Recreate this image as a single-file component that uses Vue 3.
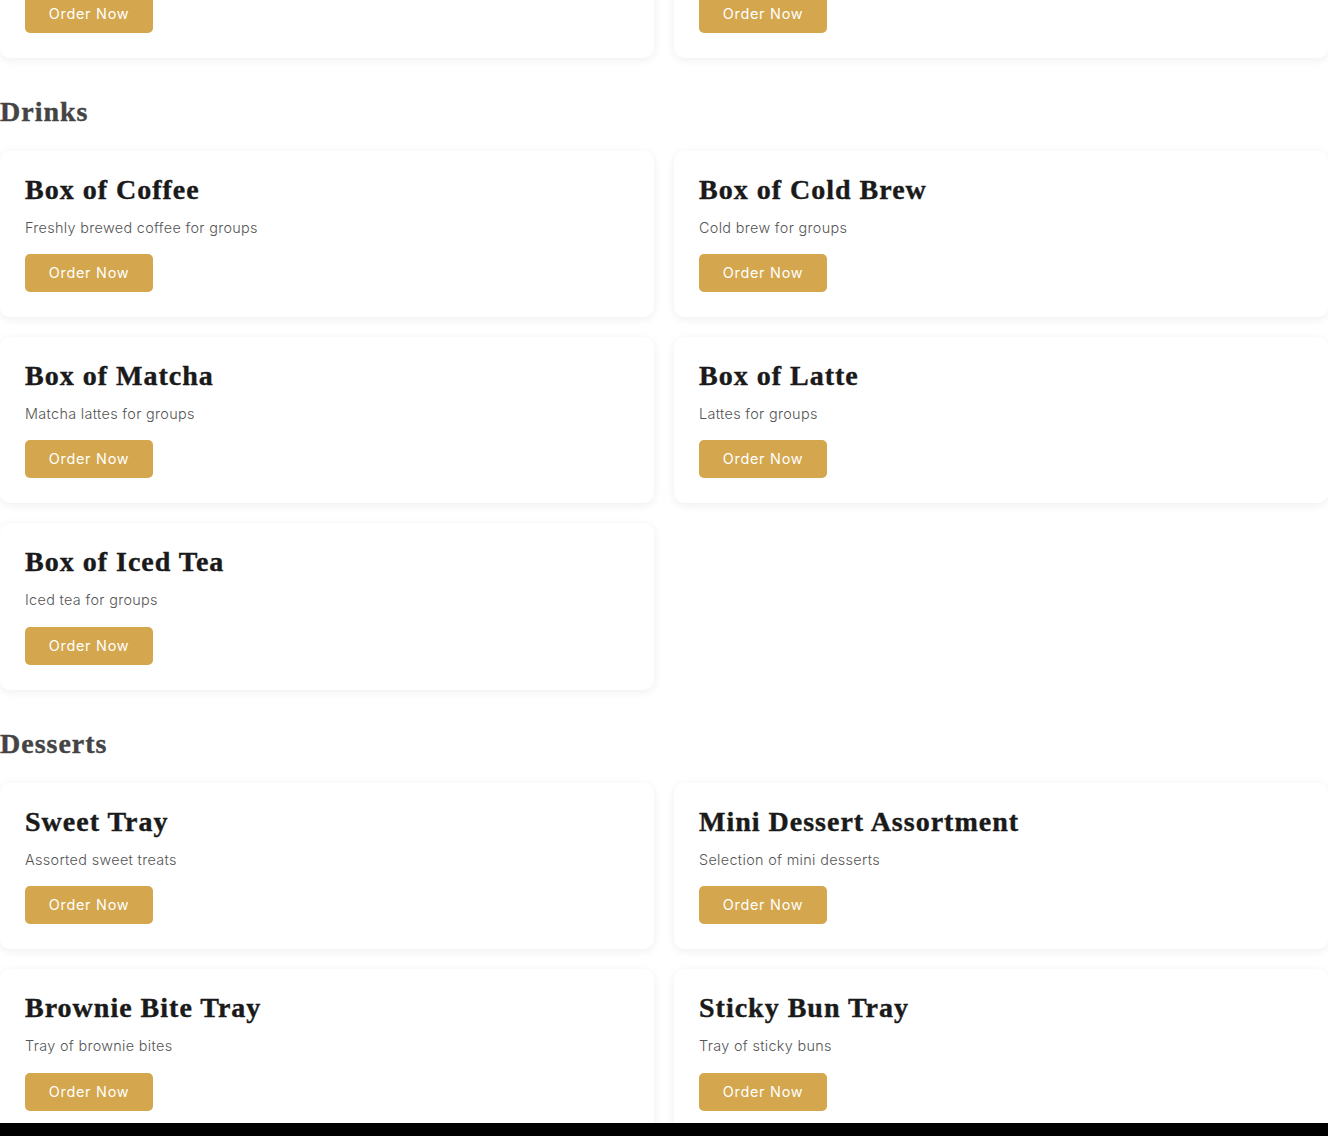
<script setup>
const sections = [
  {
    // only the buttons of this row are still on screen
    items: [{}, {}],
  },
  {
    name: 'Drinks',
    items: [
      { title: 'Box of Coffee', text: 'Freshly brewed coffee for groups' },
      { title: 'Box of Cold Brew', text: 'Cold brew for groups' },
      { title: 'Box of Matcha', text: 'Matcha lattes for groups' },
      { title: 'Box of Latte', text: 'Lattes for groups' },
      { title: 'Box of Iced Tea', text: 'Iced tea for groups' },
    ],
  },
  {
    name: 'Desserts',
    items: [
      { title: 'Sweet Tray', text: 'Assorted sweet treats' },
      { title: 'Mini Dessert Assortment', text: 'Selection of mini desserts' },
      { title: 'Brownie Bite Tray', text: 'Tray of brownie bites' },
      { title: 'Sticky Bun Tray', text: 'Tray of sticky buns' },
    ],
  },
]
</script>

<template>
  <div class="page">
    <main class="menu">
      <div class="scroll">
        <section v-for="(s, i) in sections" :key="i">
          <h2 v-if="s.name">{{ s.name }}</h2>
          <div class="grid">
            <article v-for="(item, j) in s.items" :key="j" class="card">
              <h3 v-if="item.title">{{ item.title }}</h3>
              <p v-if="item.text">{{ item.text }}</p>
              <button type="button">Order Now</button>
            </article>
          </div>
        </section>
      </div>
    </main>
    <footer></footer>
  </div>
</template>

<style>
html,
body {
  margin: 0;
  background: #fff;
  overflow: hidden;
}
</style>

<style scoped>
.page {
  height: 1136px;
  display: flex;
  flex-direction: column;
  font-family: Inter, "Open Sans", sans-serif;
}
.menu {
  flex: 1;
  min-height: 0;
  overflow: hidden;
}
.scroll {
  margin-top: -108.8px;
}
h2 {
  height: 93px;
  margin: 0;
  padding-top: 37px;
  box-sizing: border-box;
  font: 700 28px/33px "Liberation Serif", serif;
  letter-spacing: 1px;
  color: #444;
  -webkit-text-stroke: 0.4px #444;
}
.grid {
  display: grid;
  grid-template-columns: 654px 654px;
  gap: 20px;
}
.card {
  height: 166.4px;
  box-sizing: border-box;
  padding: 25px;
  display: flex;
  flex-direction: column;
  align-items: flex-start;
  background: #fff;
  border-radius: 10px;
  box-shadow: 0 2px 10px rgba(0, 0, 0, 0.07);
}
h3 {
  margin: 0 0 14px;
  font: 700 28px/28px "Liberation Serif", serif;
  letter-spacing: 1px;
  color: #1a1a1a;
  -webkit-text-stroke: 0.4px #1a1a1a;
}
p {
  margin: 0 0 16px;
  font-size: 14.4px;
  font-weight: 300;
  line-height: 20.4px;
  letter-spacing: 0.33px;
  color: #555;
}
button {
  display: block;
  width: 128px;
  height: 38px;
  margin-top: auto;
  padding: 0 0 1px;
  border: 0;
  border-radius: 5px;
  background: #d4a64d;
  color: #fff;
  font: 400 14.4px Inter, "Open Sans", sans-serif;
  letter-spacing: 0.75px;
}
footer {
  height: 13px;
  background: #000;
}
</style>
